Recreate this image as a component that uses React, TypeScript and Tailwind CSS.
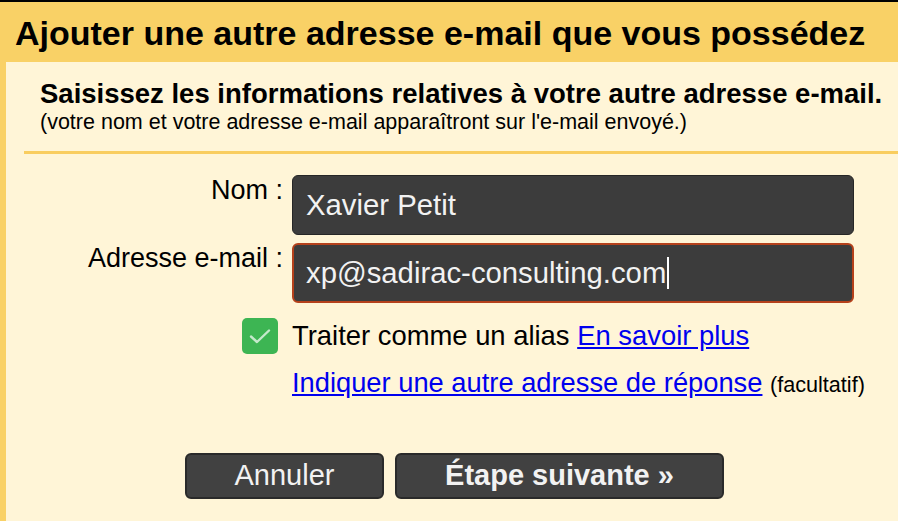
export default function App() {
  return (
    <div className="min-h-[521px] bg-black pt-[2px] font-['Liberation_Sans',Arial,sans-serif] text-black">
      <div className="min-h-[519px] bg-[#f9d166] pl-[6px]">
        <h1 className="-ml-[6px] flex h-[60px] items-center pl-[15px] pt-[1px] text-[34px] font-bold leading-none">
          Ajouter une autre adresse e-mail que vous possédez
        </h1>
        <div className="min-h-[459px] bg-[#fff5d7] pt-[17px]">
          <div className="pl-[34px]">
            <h2 className="text-[27.5px] font-bold leading-[30px]">
              Saisissez les informations relatives à votre autre adresse e-mail.
            </h2>
            <p className="mt-[1px] text-[21.5px] leading-[24px]">
              (votre nom et votre adresse e-mail apparaîtront sur l'e-mail envoyé.)
            </p>
          </div>
          <div className="ml-[18px] mt-[17px] h-[3px] bg-[#f9cd5f]" />

          <div className="mt-[21px] flex flex-col gap-[8px]">
            <div className="flex items-start">
              <label className="w-[277px] text-right text-[27px] leading-[30px]">Nom :</label>
              <div className="ml-[9px] flex h-[60px] w-[562px] items-center rounded-[6px] border border-[#262626] bg-[#3c3c3c] px-[13px] text-[29.3px] text-[#f2f2f2]">
                Xavier Petit
              </div>
            </div>
            <div className="flex items-start">
              <label className="w-[277px] text-right text-[27px] leading-[30px]">Adresse e-mail :</label>
              <div className="ml-[9px] flex h-[60px] w-[562px] items-center rounded-[6px] border-2 border-[#b5411b] bg-[#3c3c3c] px-[12px] text-[29.3px] text-[#f2f2f2]">
                xp@sadirac-consulting.com
                <span className="ml-[1px] h-[32px] w-[2px] bg-white" />
              </div>
            </div>
          </div>

          <div className="mt-[15px] flex items-center">
            <div className="ml-[236px] flex h-[36px] w-[36px] items-center justify-center rounded-[5px] bg-[#3db553]">
              <svg width="28" height="28" viewBox="0 0 28 28" fill="none">
                <path d="M5 14.5 L11 20 L23 8.5" stroke="rgba(255,255,255,0.7)" strokeWidth="2.4" strokeLinecap="round" strokeLinejoin="round" />
              </svg>
            </div>
            <p className="ml-[14px] text-[27.4px] leading-[30px]">
              Traiter comme un alias{' '}
              <a href="#" className="text-[#0000ee] underline">En savoir plus</a>
            </p>
          </div>

          <p className="ml-[286px] mt-[14px] text-[27.3px] leading-[30px]">
            <a href="#" className="text-[#0000ee] underline">Indiquer une autre adresse de réponse</a>{' '}
            <span className="text-[21.6px]">(facultatif)</span>
          </p>

          <div className="ml-[179px] mt-[53px] flex gap-[11px]">
            <button className="flex h-[46px] w-[199px] items-center justify-center rounded-[6px] border-2 border-[#2a2a2a] bg-[#414141] text-[29px] text-[#f2f2f2]">
              Annuler
            </button>
            <button className="flex h-[46px] w-[329px] items-center justify-center rounded-[6px] border-2 border-[#2a2a2a] bg-[#414141] text-[29px] font-bold text-[#f2f2f2]">
              Étape suivante »
            </button>
          </div>
        </div>
      </div>
    </div>
  );
}
